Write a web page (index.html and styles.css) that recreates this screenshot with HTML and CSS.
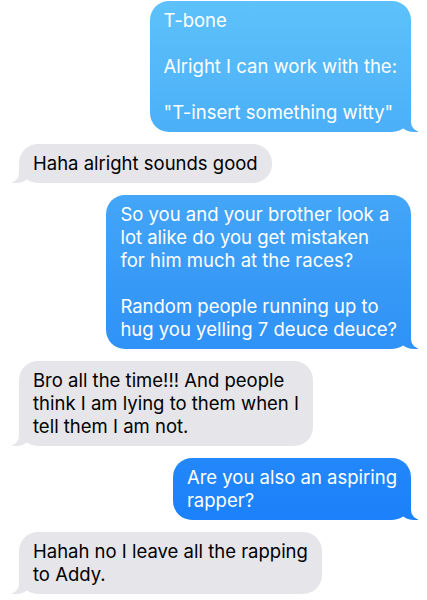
FILE: index.html
```html
<!DOCTYPE html>
<html lang="en">
<head>
    <meta charset="UTF-8">
    <meta name="viewport" content="width=device-width, initial-scale=1.0">
    <title>Messages</title>
    <link rel="stylesheet" href="styles.css">
</head>
<body>
    <section class="chat">
        <div class="msg sent">T-bone<br><br>Alright I can work with the:<br><br>"T-insert something witty"</div>
        <div class="msg received">Haha alright sounds good</div>
        <div class="msg sent">So you and your brother look a<br>lot alike do you get mistaken<br>for him much at the races?<br><br>Random people running up to<br>hug you yelling 7 deuce deuce?</div>
        <div class="msg received">Bro all the time!!! And people<br>think I am lying to them when I<br>tell them I am not.</div>
        <div class="msg sent">Are you also an aspiring<br>rapper?</div>
        <div class="msg received">Hahah no I leave all the rapping<br>to Addy.</div>
    </section>
</body>
</html>
```

FILE: styles.css
```css
body { margin: 0; padding: 0; background: #fff; font-family: Inter, "Noto Sans", sans-serif; }
.chat { display: flex; flex-direction: column; gap: 12px; padding: 1px 16px 0 19px; }
.msg { position: relative; padding: 8px 14px; border-radius: 19px; font-size: 18.5px; line-height: 23px; white-space: nowrap; }
.sent { align-self: flex-end; color: #fff; background: linear-gradient(#5dc2fa, #3597f6 50%, #1279fc) fixed; }
.received { align-self: flex-start; color: #000; background: #e5e5ea; }

/* tails */
.msg::before, .msg::after { content: ""; position: absolute; bottom: 0; height: 20px; }
.sent::before { right: -7px; width: 20px; background: linear-gradient(#5dc2fa, #3597f6 50%, #1279fc) fixed; border-bottom-left-radius: 16px 14px; }
.sent::after { right: -10px; width: 10px; background: #fff; border-bottom-left-radius: 10px; }
.received::before { left: -7px; width: 20px; background: #e5e5ea; border-bottom-right-radius: 16px 14px; }
.received::after { left: -10px; width: 10px; background: #fff; border-bottom-right-radius: 10px; }
```
